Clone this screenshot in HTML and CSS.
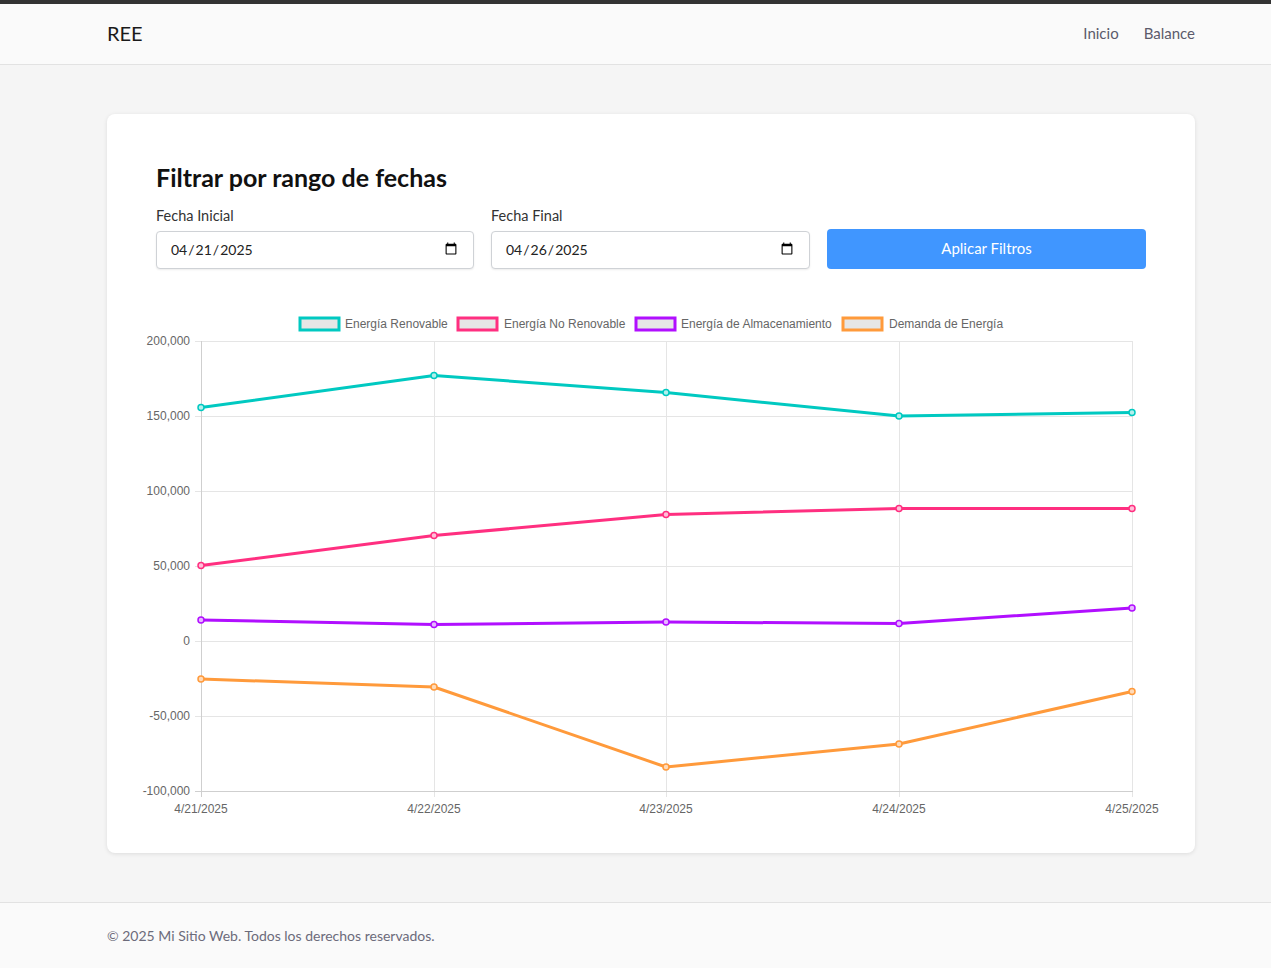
FILE: index.html
```html
<!DOCTYPE html>
<html lang="es">
<head>
<meta charset="utf-8">
<title>REE</title>
<link rel="stylesheet" href="styles.css">
</head>
<body>
<header class="navbar">
  <div class="container nav-inner">
    <a class="brand" href="#">REE</a>
    <nav class="nav-links">
      <a href="#">Inicio</a>
      <a href="#">Balance</a>
    </nav>
  </div>
</header>
<main class="main">
  <div class="container">
    <section class="card">
      <h1 class="card-title">Filtrar por rango de fechas</h1>
      <div class="filters">
        <div class="field">
          <label class="field-label" for="start">Fecha Inicial</label>
          <input class="field-input" id="start" type="date" value="2025-04-21">
        </div>
        <div class="field">
          <label class="field-label" for="end">Fecha Final</label>
          <input class="field-input" id="end" type="date" value="2025-04-26">
        </div>
        <div class="field field-btn">
          <button class="btn-primary" type="button">Aplicar Filtros</button>
        </div>
      </div>
      <div class="chart-wrap">
        <svg class="chart" width="990" height="510" viewBox="0 0 990 510">
          <g transform="translate(-156,-310)">
            <g class="legend">
              <rect x="300" y="318" width="39" height="12" fill="#e6e6e6" stroke="#00c9c1" stroke-width="3"/>
              <text x="345" y="328">Energía Renovable</text>
              <rect x="458" y="318" width="39" height="12" fill="#e6e6e6" stroke="#ff2f80" stroke-width="3"/>
              <text x="504" y="328">Energía No Renovable</text>
              <rect x="636" y="318" width="39" height="12" fill="#e6e6e6" stroke="#b10fff" stroke-width="3"/>
              <text x="681" y="328">Energía de Almacenamiento</text>
              <rect x="843" y="318" width="39" height="12" fill="#e6e6e6" stroke="#ff9a3b" stroke-width="3"/>
              <text x="889" y="328">Demanda de Energía</text>
            </g>
            <g class="grid" stroke="#e5e5e5" stroke-width="1">
              <line x1="195" y1="341.5" x2="1132" y2="341.5"/>
              <line x1="195" y1="416.5" x2="1132" y2="416.5"/>
              <line x1="195" y1="491.5" x2="1132" y2="491.5"/>
              <line x1="195" y1="566.5" x2="1132" y2="566.5"/>
              <line x1="195" y1="641.5" x2="1132" y2="641.5"/>
              <line x1="195" y1="716.5" x2="1132" y2="716.5"/>
              <line x1="434.5" y1="341" x2="434.5" y2="797"/>
              <line x1="666.5" y1="341" x2="666.5" y2="797"/>
              <line x1="899.5" y1="341" x2="899.5" y2="797"/>
              <line x1="1132.5" y1="341" x2="1132.5" y2="797"/>
            </g>
            <g stroke="#cfcfcf" stroke-width="1">
              <line x1="201.5" y1="341" x2="201.5" y2="797"/>
              <line x1="195" y1="791.5" x2="1133" y2="791.5"/>
            </g>
            <g class="ylabels">
              <text x="190" y="345">200,000</text>
              <text x="190" y="420">150,000</text>
              <text x="190" y="495">100,000</text>
              <text x="190" y="570">50,000</text>
              <text x="190" y="645">0</text>
              <text x="190" y="720">-50,000</text>
              <text x="190" y="795">-100,000</text>
            </g>
            <g class="xlabels">
              <text x="201" y="813">4/21/2025</text>
              <text x="434" y="813">4/22/2025</text>
              <text x="666" y="813">4/23/2025</text>
              <text x="899" y="813">4/24/2025</text>
              <text x="1132" y="813">4/25/2025</text>
            </g>
            <g fill="none" stroke-width="3" stroke-linejoin="round">
              <polyline stroke="#00c9c1" points="201,407.5 434,375.5 666,392.5 899,416 1132,412.5"/>
              <polyline stroke="#ff2f80" points="201,565.5 434,535.5 666,514.5 899,508.5 1132,508.5"/>
              <polyline stroke="#b10fff" points="201,620 434,624.5 666,622 899,623.5 1132,608"/>
              <polyline stroke="#ff9a3b" points="201,679 434,687 666,767 899,744 1132,691.5"/>
            </g>
            <g stroke-width="1.5">
              <g stroke="#00c9c1" fill="#b3efec">
                <circle cx="201" cy="407.5" r="3"/><circle cx="434" cy="375.5" r="3"/><circle cx="666" cy="392.5" r="3"/><circle cx="899" cy="416" r="3"/><circle cx="1132" cy="412.5" r="3"/>
              </g>
              <g stroke="#ff2f80" fill="#ffc0d9">
                <circle cx="201" cy="565.5" r="3"/><circle cx="434" cy="535.5" r="3"/><circle cx="666" cy="514.5" r="3"/><circle cx="899" cy="508.5" r="3"/><circle cx="1132" cy="508.5" r="3"/>
              </g>
              <g stroke="#b10fff" fill="#e6b8ff">
                <circle cx="201" cy="620" r="3"/><circle cx="434" cy="624.5" r="3"/><circle cx="666" cy="622" r="3"/><circle cx="899" cy="623.5" r="3"/><circle cx="1132" cy="608" r="3"/>
              </g>
              <g stroke="#ff9a3b" fill="#ffdab8">
                <circle cx="201" cy="679" r="3"/><circle cx="434" cy="687" r="3"/><circle cx="666" cy="767" r="3"/><circle cx="899" cy="744" r="3"/><circle cx="1132" cy="691.5" r="3"/>
              </g>
            </g>
          </g>
        </svg>
      </div>
    </section>
  </div>
</main>
<footer class="footer">
  <div class="container">
    <p class="footer-text">© 2025 Mi Sitio Web. Todos los derechos reservados.</p>
  </div>
</footer>
</body>
</html>
```

FILE: styles.css
```css
* { box-sizing: border-box; }
html, body { margin: 0; padding: 0; }
body {
  font-family: "Lato", "Noto Sans", sans-serif;
  background: #f5f5f5;
  color: #212529;
  border-top: 4px solid #333;
  min-height: 968px;
  display: flex;
  flex-direction: column;
}
.container {
  width: 1088px;
  margin-left: 107px;
}
.navbar {
  background: #fafafa;
  border-bottom: 1px solid #e2e2e2;
  height: 61px;
}
.nav-inner {
  height: 58px;
  display: flex;
  align-items: center;
  justify-content: space-between;
}
.brand {
  font-size: 20px;
  color: #1a1a1a;
  text-decoration: none;
}
.nav-links {
  display: flex;
  gap: 25px;
}
.nav-links a {
  color: #5b5a6b;
  text-decoration: none;
  font-size: 15px;
}
.main {
  padding: 49px 0 49px;
  flex: 1;
}
.card {
  background: #fff;
  border-radius: 8px;
  box-shadow: 0 1px 4px rgba(0,0,0,0.1);
  padding: 48px 49px 33px;
  height: 739px;
}
.card-title {
  margin: 0;
  font-size: 25px;
  font-weight: 700;
  line-height: 30px;
  color: #111;
}
.filters {
  display: grid;
  grid-template-columns: 318px 319px 319px;
  column-gap: 17px;
  margin-top: 14px;
  align-items: end;
}
.field {
  display: flex;
  flex-direction: column;
}
.field-label {
  font-size: 14.5px;
  line-height: 20px;
  color: #333;
  margin-bottom: 5px;
}
.field-input {
  height: 38px;
  border: 1px solid #cfd2d6;
  border-radius: 4px;
  padding: 0 13px 2px;
  font-family: "Lato", "Noto Sans", sans-serif;
  font-size: 14px;
  color: #222;
  background: #fff;
  box-shadow: 0 1px 2px rgba(0,0,0,0.08);
}
.btn-primary {
  height: 40px;
  margin-bottom: 0;
  border: none;
  border-radius: 4px;
  background: #4096ff;
  color: #fff;
  font-family: "Lato", "Noto Sans", sans-serif;
  font-size: 15px;
  padding-bottom: 3px;
}
.chart-wrap {
  margin-top: 41px;
}
.chart {
  display: block;
  overflow: visible;
  font-family: "Liberation Sans", Arial, sans-serif;
  font-size: 12px;
}
.legend text { fill: #666; }
.ylabels text { fill: #666; text-anchor: end; }
.xlabels text { fill: #666; text-anchor: middle; }
.footer {
  background: #fafafa;
  border-top: 1px solid #e2e2e2;
  height: 66px;
}
.footer-text {
  margin: 0;
  padding-top: 23px;
  font-size: 14px;
  line-height: 20px;
  color: #6c6b7a;
}
```
